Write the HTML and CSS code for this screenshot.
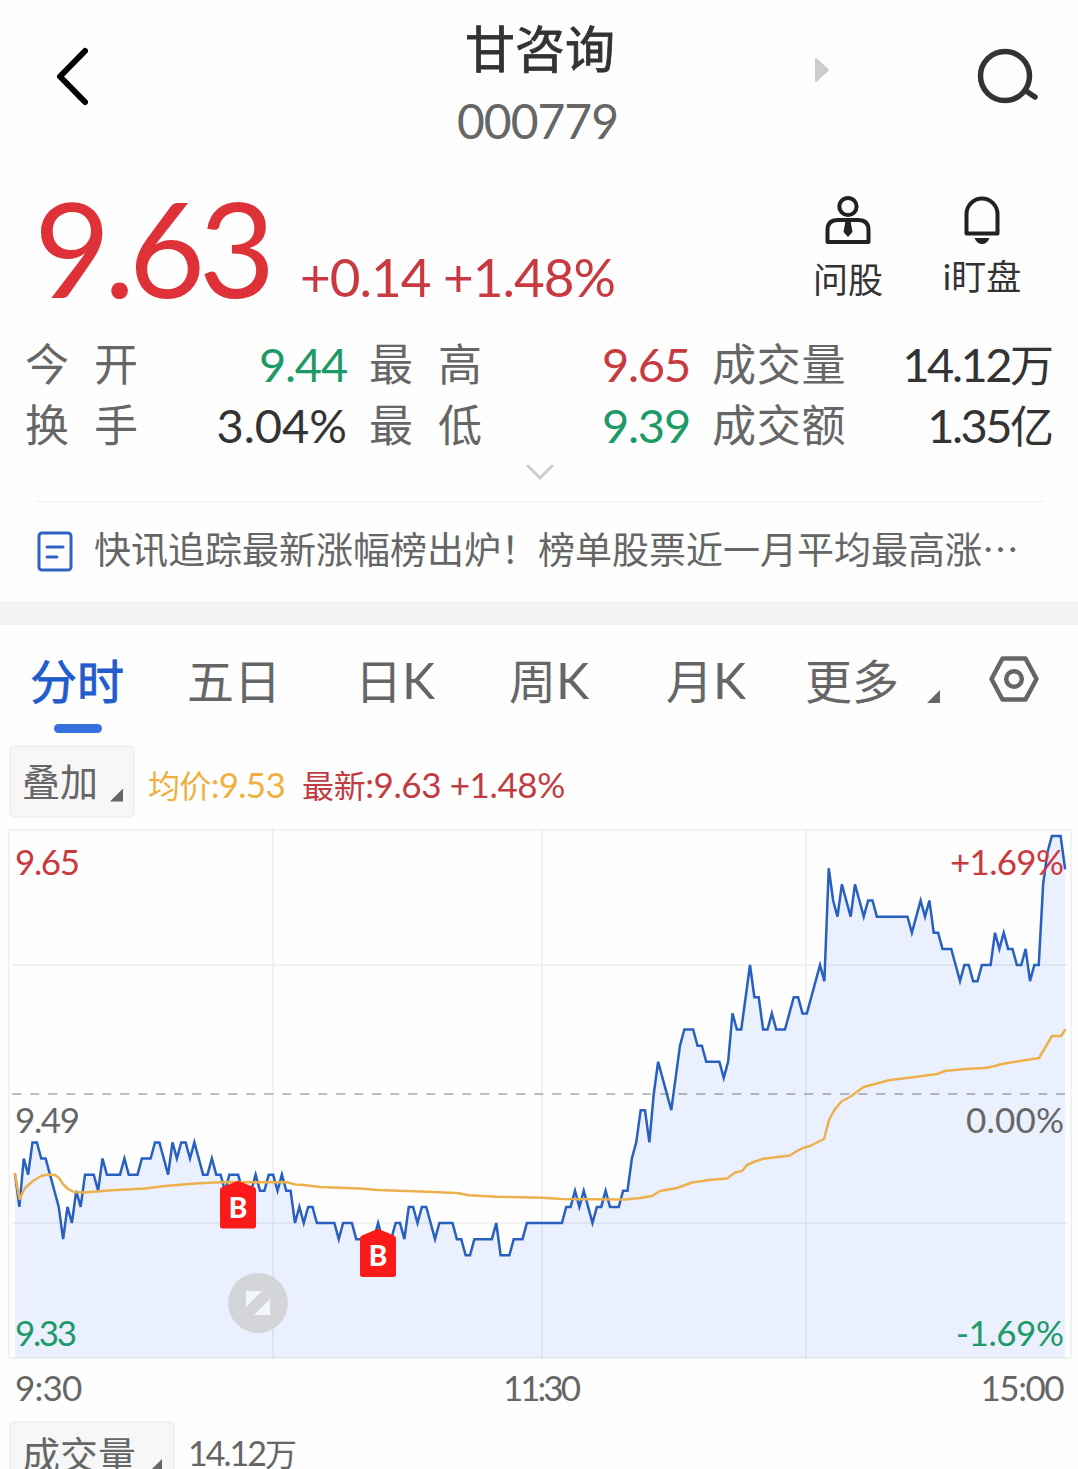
FILE: index.html
```html
<!DOCTYPE html>
<html lang="zh-CN">
<head>
    <meta charset="UTF-8">
    <meta name="viewport" content="width=device-width, initial-scale=1.0">
    <title>甘咨询 000779</title>
    <link rel="stylesheet" href="styles.css">
</head>
<body>
    <header class="header">
        <svg class="back" width="36" height="62" viewBox="0 0 36 62"><path d="M31 6 L6 31.500 L31 57"/></svg>
        <div class="title">
            <h1>甘咨询</h1>
            <div class="code">000779</div>
        </div>
        <div class="headerRight">
            <svg class="next" width="16" height="26" viewBox="0 0 16 26"><path d="M2 2 L14 13 L2 24 Z"/></svg>
            <svg class="search" width="62" height="58" viewBox="0 0 62 58"><circle cx="28" cy="29" r="24.500"/><path d="M49 44 L58 50"/></svg>
        </div>
    </header>

    <section class="quote">
        <div class="price">9.63</div>
        <div class="change">+0.14 +1.48%</div>
        <div class="action">
            <svg width="48" height="50" viewBox="0 0 48 50">
                <circle cx="24" cy="11.500" r="8.600"/>
                <path d="M3.500 47 V35 Q3.500 25 14 25 H34 Q44.500 25 44.500 35 V47 Z"/>
                <path class="solid" d="M21.500 26 H26.500 L28.500 37 L24 42 L19.500 37 Z"/>
            </svg>
            <span>问股</span>
        </div>
        <div class="action watch">
            <svg width="48" height="50" viewBox="0 0 48 50">
                <path d="M8.500 38.500 V19 A15.500 15.500 0 0 1 39.500 19 V38.500 Z"/>
                <path class="solid" d="M16.500 43 H31.500 Q29 49 24 49 Q19 49 16.500 43 Z"/>
            </svg>
            <span>i盯盘</span>
        </div>
    </section>

    <section class="stats">
        <div class="stat"><span class="label wide">今开</span><span class="value down">9.44</span></div>
        <div class="stat"><span class="label wide">最高</span><span class="value up">9.65</span></div>
        <div class="stat"><span class="label">成交量</span><span class="value amount">14.12<small>万</small></span></div>
        <div class="stat"><span class="label wide">换手</span><span class="value percent">3.04%</span></div>
        <div class="stat"><span class="label wide">最低</span><span class="value down">9.39</span></div>
        <div class="stat"><span class="label">成交额</span><span class="value amount">1.35<small>亿</small></span></div>
    </section>
    <div class="expand">
        <svg width="30" height="18" viewBox="0 0 30 18"><path d="M3 3 L15 15 L27 3"/></svg>
    </div>

    <div class="news">
        <svg width="36" height="42" viewBox="0 0 36 42"><rect x="2" y="2" width="32" height="37" rx="3"/><path d="M10 16 H26 M10 26 H20"/></svg>
        <span>快讯追踪最新涨幅榜出炉！榜单股票近一月平均最高涨…</span>
    </div>

    <nav class="tabs">
        <a class="tab active">分时</a>
        <a class="tab">五日</a>
        <a class="tab">日<b>K</b></a>
        <a class="tab">周<b>K</b></a>
        <a class="tab">月<b>K</b></a>
        <a class="tab more">更多<i class="corner"></i></a>
        <svg class="settings" width="52" height="48" viewBox="0 0 52 48"><path d="M14.500 3.500 H37.500 L48.500 24 L37.500 44.500 H14.500 L3.500 24 Z"/><circle cx="26" cy="24" r="7.800"/></svg>
    </nav>

    <div class="legend">
        <button class="picker">叠加<i class="corner"></i></button>
        <span class="avg"><small>均价</small>:9.53</span>
        <span class="last"><small>最新</small>:9.63 +1.48%</span>
    </div>

    <svg class="chart" width="1078" height="532" viewBox="0 828 1078 532">
        <path id="area" class="area"/>
        <path class="grid" d="M273 830 V1358 M542 830 V1358 M806 830 V1358 M12 965 H1068 M12 1223 H1068"/>
        <rect class="frame" x="9" y="830" width="1062" height="528"/>
        <path class="base" d="M12.300 1094 H1065"/>
        <path id="priceLine" class="priceLine"/>
        <polyline class="avgLine" points="15,1174 19.500,1199 25,1188 33,1181 41,1176 48,1174.500 55,1175 59,1178 63,1184 68,1189 74,1192 85,1192.500 108,1190.500 145,1188.500 165,1186 195,1183.500 225,1182 287,1182.300 295,1184.500 304,1185 320,1187 360,1188.500 378,1190 420,1191.600 457,1193 469,1195.300 497,1196.700 542,1197.700 562,1199 625,1199.500 640,1198 652,1196 660,1191 677,1188 692,1182.500 711,1179.700 727,1178.500 735,1172.500 742,1171 747,1165 755,1161.500 763,1158.700 790,1155.500 797,1151 803,1148 810,1146 824,1139 829,1120 835,1109 842,1101 850,1097 863.500,1087 890,1080 915,1077 937,1074 945,1071 965,1069 985,1068 995,1066 1002,1064 1020,1061 1039,1058 1052,1036 1061,1036 1065,1030"/>

        <text class="up" x="15" y="875" textLength="65">9.65</text>
        <text x="15" y="1132.500" textLength="65">9.49</text>
        <text class="down" x="15" y="1345.500" textLength="62">9.33</text>
        <text class="up" x="950" y="875" textLength="114">+1.69%</text>
        <text x="966" y="1132.500" textLength="98">0.00%</text>
        <text class="down" x="956" y="1345.500" textLength="108">-1.69%</text>

        <g class="badge">
            <path d="M220 1190 Q220 1188 222 1187 L235 1182 Q238 1180 241 1182 L254 1187 Q256 1188 256 1190 V1226 Q256 1228.500 253.500 1228.500 H222.500 Q220 1228.500 220 1226 Z"/>
            <text x="238" y="1217.500">B</text>
        </g>
        <g class="badge">
            <path d="M360 1238.500 Q360 1236.500 362 1235.500 L375 1230 Q378 1228 381 1230 L394 1235.500 Q396 1236.500 396 1238.500 V1274.500 Q396 1277 393.500 1277 H362.500 Q360 1277 360 1274.500 Z"/>
            <text x="378" y="1266">B</text>
        </g>
        <g class="fullscreen">
            <circle cx="258" cy="1303" r="30"/>
            <path d="M246 1291 H262 L246 1307 Z M270 1299 V1315 H254 Z"/>
        </g>
    </svg>

    <div class="times"><span>9:30</span><span>11:30</span><span>15:00</span></div>

    <div class="legend volume">
        <button class="picker">成交量<i class="corner"></i></button>
        <span>14.12<small>万</small></span>
    </div>

    <script>
        // minute prices, in cents above the previous close (9.49)
        const ticks = [
            -5, -7, -4, -5, -3, -3, -4, -4, -5, -6, -7, -9, -7, -8, -6, -7, -5, -5, -5, -6,
            -4, -5, -5, -5, -5, -4, -5, -5, -5, -4, -4, -4, -3, -3, -4, -5, -3, -4, -3, -3,
            -4, -3, -4, -5, -5, -4, -5, -5, -6, -5, -5, -5, -6, -6, -6, -5, -6, -6, -5, -5,
            -6, -5, -6, -6, -8, -7, -8, -7, -7, -8, -8, -8, -8, -8, -9, -8, -8, -8, -9, -9,
            -9, -9, -9, -8, -9, -9, -9, -8, -8, -9, -7, -7, -8, -7, -7, -8, -9, -8, -8, -8,
            -8, -9, -9, -10, -10, -9, -9, -9, -9, -9, -8, -10, -10, -10, -9, -9, -9, -8, -8, -8,
            -8, -8, -8, -8, -8, -8, -7, -7, -6, -7, -6, -7, -8, -7, -7, -6, -7, -7, -7, -6,
            -6, -4, -3, -1, -1, -3, 0, 2, 1, 0, -1, 1, 3, 4, 4, 4, 3, 3, 2, 2,
            2, 2, 1, 2, 5, 4, 4, 6, 8, 6, 6, 4, 4, 5, 4, 4, 4, 5, 6, 6,
            5, 5, 6, 7, 8, 7, 14, 12, 11, 13, 12, 11, 13, 12, 11, 12, 12, 11, 11, 11,
            11, 11, 11, 11, 11, 10, 11, 12, 11, 12, 10, 10, 9, 9, 9, 8, 7, 8, 8, 7,
            7, 8, 8, 8, 10, 9, 10, 9, 9, 8, 8, 9, 7, 8, 8, 13, 15, 16, 16, 16,
            14
        ];
        const line = 'M' + ticks.map((t, i) => (15 + i * 4.375) + ' ' + (1094 - t * 16.125)).join(' L');
        document.getElementById('priceLine').setAttribute('d', line);
        document.getElementById('area').setAttribute('d', line + ' V1358 H15 Z');
    </script>
</body>
</html>
```
FILE: styles.css
```css
body {
    margin: 0;
    height: 1469px;
    overflow: hidden;
    background: #fefefe;
    color: #333;
    font-family: Lato, 'Noto Sans CJK SC', sans-serif;
}
svg {
    display: block;
    fill: none;
    stroke-linecap: round;
    stroke-linejoin: round;
}
.up {
    color: #c93a40;
    fill: #c93a40;
}
.down {
    color: #1e9968;
    fill: #1e9968;
}
.header {
    display: grid;
    grid-template-columns: 450px 180px 1fr;
    height: 180px;
}
.back {
    margin: 45px 0 0 54px;
    stroke: #000;
    stroke-width: 6;
}
.title {
    text-align: center;
}
.title h1 {
    margin: 14px 0 0;
    font-size: 50px;
    line-height: 70px;
    font-weight: 400;
    -webkit-text-stroke: 0.800px #333;
}
.code {
    margin-left: -5px;
    font-size: 48px;
    line-height: 74px;
    letter-spacing: -1px;
    color: #666;
}
.headerRight {
    display: flex;
    justify-content: space-between;
    padding: 47px 39px 0 184px;
}
.next {
    margin-top: 10px;
    fill: #ccc;
    stroke: #ccc;
    stroke-width: 2;
}
.search {
    stroke: #333;
    stroke-width: 5.500;
}
.quote {
    display: flex;
    height: 160px;
    padding-left: 34px;
    color: #de3238;
}
.price {
    width: 266px;
    font-size: 132px;
    line-height: 134px;
    letter-spacing: -6.500px;
}
.change {
    width: 502px;
    font-size: 53px;
    line-height: 193px;
    letter-spacing: -1px;
    color: #c93a40;
    white-space: nowrap;
}
.action {
    display: flex;
    flex-direction: column;
    align-items: center;
    width: 92px;
    padding-top: 15px;
    color: #333;
    font-size: 35px;
    line-height: 48px;
    white-space: nowrap;
}
.action svg {
    stroke: #222;
    stroke-width: 4;
    margin-bottom: 20px;
}
.action .solid {
    fill: #222;
    stroke: none;
}
.action span {
    margin-top: -10px;
}
.watch {
    margin-left: 42px;
}
.watch span {
    margin-top: -13px;
}
.stats {
    display: grid;
    grid-template-columns: 322px 321px 342px;
    column-gap: 22px;
    row-gap: 0;
    padding-left: 25px;
    margin-top: -6px;
}
.stat {
    display: flex;
    justify-content: space-between;
    height: 61px;
    line-height: 61px;
}
.label {
    font-size: 44px;
    color: #666;
    letter-spacing: 0.700px;
}
.wide {
    letter-spacing: 25px;
}
.value {
    font-size: 47px;
    letter-spacing: -1.200px;
}
.percent {
    letter-spacing: 0;
}
.amount {
    letter-spacing: -2.500px;
}
.value small {
    font-size: 44px;
    letter-spacing: 0;
}
.expand {
    display: flex;
    justify-content: center;
    height: 45px;
    margin: 0 34px 0 36px;
    border-bottom: 1px solid #efefef;
}
.expand svg {
    margin-top: 7px;
    stroke: #ccc;
    stroke-width: 3;
}
.news {
    display: flex;
    align-items: center;
    gap: 21px;
    height: 99px;
    padding-left: 37px;
    border-bottom: 24px solid #f4f4f4;
    font-family: 'Noto Sans CJK SC', sans-serif;
    font-size: 37px;
    color: #666;
    white-space: nowrap;
}
.news svg {
    stroke: #2f62c4;
    stroke-width: 3;
}
.news span {
    padding-bottom: 7px;
}
.tabs {
    display: flex;
    height: 119px;
    padding-left: 30px;
    font-size: 47px;
    line-height: 112px;
    color: #666;
}
.tab {
    width: 157px;
    white-space: nowrap;
}
.tab:nth-child(2) {
    width: 168px;
}
.tab:nth-child(3) {
    width: 154px;
}
.tab:nth-child(5) {
    width: 139px;
}
.tab b {
    font-size: 50px;
    line-height: 1;
    font-weight: 400;
    letter-spacing: -2px;
}
.tab.active {
    color: #1f5ccc;
    -webkit-text-stroke: 0.800px #1f5ccc;
}
.active::after {
    content: '';
    display: block;
    width: 48px;
    height: 9px;
    margin: -13px 0 0 24px;
    border-radius: 5px;
    background: #3670df;
}
.corner {
    display: inline-block;
    width: 13px;
    height: 13px;
    background: #666;
    clip-path: polygon(100% 0, 100% 100%, 0 100%);
}
.tab .corner {
    margin-left: 28px;
    vertical-align: -4px;
}
.settings {
    margin: 30px 0 0 26px;
    stroke: #666;
    stroke-width: 4.500;
}
.legend {
    display: flex;
    align-items: center;
    height: 73px;
    margin: 1px 0 10px 9px;
    font-size: 35px;
    letter-spacing: -0.700px;
    color: #666;
}
.legend small {
    font-size: 32px;
}
.legend span {
    padding-top: 5px;
}
.picker {
    box-sizing: border-box;
    height: 73px;
    margin-right: 13px;
    padding: 0 10px 5px 11px;
    border: 2px solid #f0f0f0;
    border-radius: 6px;
    background: #f7f7f7;
    color: #666;
    font: 38px 'Noto Sans CJK SC', sans-serif;
}
.picker .corner {
    margin-left: 12px;
    vertical-align: -6px;
}
.avg {
    margin-right: 17px;
    color: #f0b040;
}
.legend .last {
    color: #bf3c42;
    letter-spacing: -0.400px;
}
.grid, .frame {
    stroke: #00000010;
    stroke-width: 1.600;
}
.area {
    fill: #eaf0fe;
}
.base {
    stroke: #00000040;
    stroke-width: 2;
    stroke-linecap: butt;
    stroke-dasharray: 9 9;
}
.priceLine {
    stroke: #2760bf;
    stroke-width: 2.500;
    stroke-linejoin: miter;
}
.avgLine {
    stroke: #ecb04c;
    stroke-width: 2.500;
}
.chart text {
    font-size: 35px;
}
.chart text:not([class]) {
    fill: #666;
}
.chart .badge path {
    fill: #fa1a1a;
}
.chart .badge text {
    fill: #fff;
    font-size: 28px;
    font-weight: 900;
    text-anchor: middle;
}
.fullscreen circle {
    fill: #d4d5d9;
}
.fullscreen path {
    fill: #f4f6fd;
}
.times {
    display: grid;
    grid-template-columns: 1fr 1fr 1fr;
    height: 61px;
    padding: 0 14px 0 15px;
    font-size: 35px;
    line-height: 54px;
    letter-spacing: -0.800px;
    color: #666;
}
.times span:nth-child(2) {
    text-align: center;
    padding-left: 2px;
    letter-spacing: -3px;
}
.times span:nth-child(3) {
    text-align: right;
    padding-right: 1px;
    letter-spacing: -1.500px;
}
.volume {
    align-items: flex-start;
    height: 48px;
    margin: 0 0 0 9px;
}
.volume .picker {
    height: 73px;
    padding: 0 11px 10px 11px;
}
.volume .picker .corner {
    margin-left: 13px;
    vertical-align: -3px;
}
.volume span {
    padding-top: 10px;
    font-size: 34px;
    line-height: 44px;
    letter-spacing: -2px;
}
.volume small {
    font-size: 32px;
}
```
